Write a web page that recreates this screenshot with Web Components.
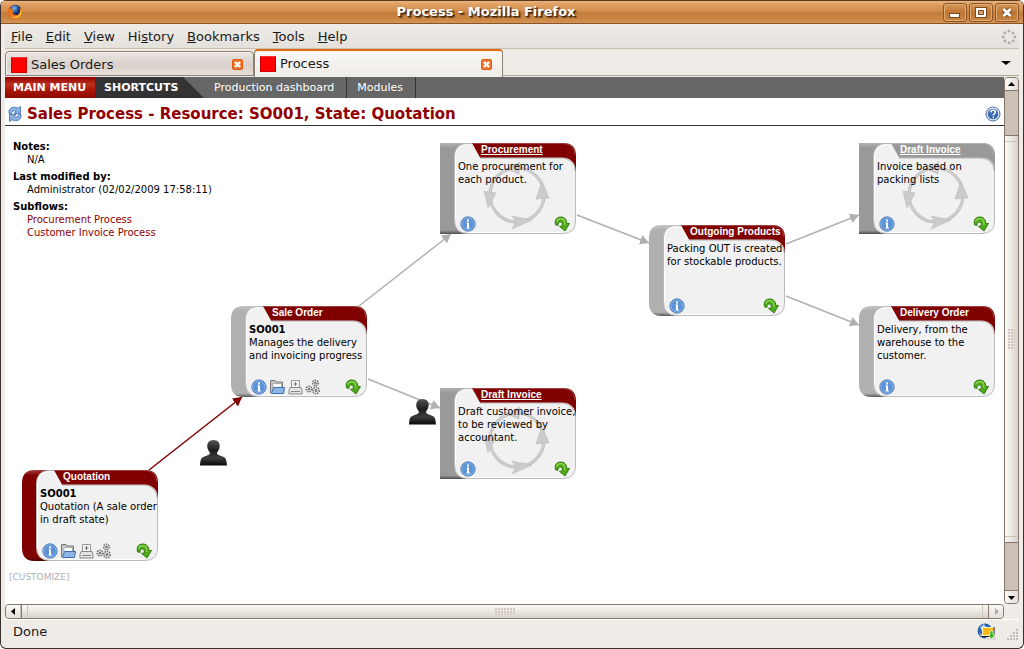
<!DOCTYPE html>
<html lang="en">
<head>
<meta charset="utf-8">
<title>Process - Mozilla Firefox</title>
<style>
html, body { margin: 0; height: 100%; background: #fff; }
body { font: 13px/16px "DejaVu Sans", sans-serif; color: #1a1a1a; }
</style>
</head>
<body>
<browser-window>
  <title-bar slot="title">Process - Mozilla Firefox</title-bar>
  <menu-bar slot="menu"></menu-bar>
  <tab-strip slot="tabs">
    <browser-tab>Sales Orders</browser-tab>
    <browser-tab active>Process</browser-tab>
  </tab-strip>
  <process-page slot="page"></process-page>
  <scroll-bar slot="vbar" vertical style="--a:44;--t:409;--b:47"></scroll-bar>
  <scroll-bar slot="hbar" style="--a:1;--t:967;--b:0"></scroll-bar>
  <status-bar slot="status">Done</status-bar>
</browser-window>

<script>
const define = (name, html, setup) => {
  const template = document.createElement('template');
  template.innerHTML = html;
  customElements.define(name, class extends HTMLElement {
    constructor() {
      super();
      this.attachShadow({ mode: 'open' }).append(template.content.cloneNode(true));
    }
    connectedCallback() { if (setup) setup(this, this.shadowRoot); }
  });
};
const RESET = `*{box-sizing:border-box} button{font:inherit;color:inherit;background:none;border:0;padding:0;margin:0} svg{display:block}`;

define('browser-window', `<style>${RESET}
:host{display:flex;flex-direction:column;min-height:100vh;box-sizing:border-box;background:#efebe7;border:1px solid #3b3230;border-top:0;border-radius:6px;overflow:hidden}
.inner{flex:1;display:flex;flex-direction:column;padding:0 4px}
.view{flex:1;display:grid;grid-template-columns:minmax(0,1fr) 15px;grid-template-rows:minmax(0,1fr) 15px;border-bottom:1px solid #fff}
.view slot[name=hbar]{display:block;grid-column:1}
</style>
<slot name="title"></slot>
<div class="inner">
<slot name="menu"></slot><slot name="tabs"></slot>
<main class="view"><slot name="page"></slot><slot name="vbar"></slot><slot name="hbar"></slot></main>
<slot name="status"></slot>
</div>`);

define('title-bar', `<style>${RESET}
:host{display:grid;grid-template-columns:1fr auto 1fr;align-items:center;height:24px;flex:none;box-sizing:border-box;padding:0 4px 0 6px;border-top:1px solid #5a3a20;border-bottom:1px solid #8a5526;background:linear-gradient(#e9b27c 0,#dd9c5e 20%,#d08c4b 48%,#c37d3a 52%,#c98542 80%,#d59556);color:#fff;font-weight:bold}
h1{font:inherit;margin:0;text-shadow:1px 1px 1px #3c2410,2px 2px 1px #6b4420;padding-right:54px}
.b{display:flex;gap:2px;justify-content:flex-end}
.b button{width:24px;height:19px;border:1px solid #8a5526;border-radius:3px;box-shadow:inset 0 0 0 1px #e2ac76;background:linear-gradient(#d8985b,#bd7634 50%,#c98542)}
</style>
<svg width="16" height="16" viewBox="0 0 16 16"><defs><radialGradient id="g" cx=".4" cy=".3"><stop offset="0" stop-color="#7cc3f2"/><stop offset=".6" stop-color="#2a5cae"/><stop offset="1" stop-color="#132a66"/></radialGradient></defs><circle cx="8" cy="8" r="7.2" fill="#d2470c"/><circle cx="8.3" cy="6.6" r="5.8" fill="url(#g)"/><path d="M1 5 2.5 2.6 3 4.4 6 4.2 5 6.2 7.5 7 5.8 8.6C6 11 9 12 11.5 10.2 13 9 13.5 6 12.8 3.6 15.5 6 15.8 10 13.3 13 10 16.3 5 15.8 2.4 12.6.8 10.5.4 7.6 1 5z" fill="#e8701a"/><path d="M13.6 4.5C14.2 9 12 12.6 8 12.8 5 12.8 4 11.4 3.5 10.4 5 15 12 15.5 14.2 10.5c.9-2 .4-4.500-.6-6z" fill="#fbc62d"/></svg>
<h1><slot></slot></h1>
<div class="b">
<button aria-label="Minimize"><svg width="22" height="17"><rect x="5" y="9" width="11" height="5" fill="#7a4a1e"/><rect x="6" y="10" width="9" height="3" fill="#fff"/></svg></button>
<button aria-label="Maximize"><svg width="22" height="17"><rect x="5.500" y="3.500" width="11" height="10" fill="none" stroke="#7a4a1e"/><path d="M6 4h10v9H6z" fill="#fff"/><path d="M8.500 6.500h5v4h-5z" fill="#d5a06a" stroke="#7a4a1e"/></svg></button>
<button aria-label="Close"><svg width="22" height="17"><path d="m7.500 5 7 7m0-7-7 7" stroke="#7a4a1e" stroke-width="5"/><path d="m7.500 5 7 7m0-7-7 7" stroke="#fff" stroke-width="3"/></svg></button>
</div>`);

define('menu-bar', `<style>${RESET}
:host{display:flex;justify-content:space-between;align-items:center;height:25px;flex:none;box-sizing:border-box;border-bottom:1px solid #cdbfae;background:linear-gradient(#efebe7,#e4e0da);padding:2px 2px 0 6px}
nav{display:flex;gap:13px}
</style>
<nav><button><u>F</u>ile</button><button><u>E</u>dit</button><button><u>V</u>iew</button><button>Hi<u>s</u>tory</button><button><u>B</u>ookmarks</button><button><u>T</u>ools</button><button><u>H</u>elp</button></nav>
<svg width="16" height="16" viewBox="-8 -8 16 16" fill="#b0aba4"><g id="d"><circle cy="-5.800" r="1.400"/><circle cx="5.800" r="1.400"/><circle cy="5.800" r="1.400"/><circle cx="-5.800" r="1.400"/></g><use href="#d" transform="rotate(45)"/></svg>`);

define('tab-strip', `<style>${RESET}
:host{display:flex;align-items:flex-end;height:28px;flex:none;box-sizing:border-box;background:linear-gradient(#b1a596,#b1a596) 0 26px/100% 1px no-repeat}
.all{margin-left:auto;align-self:center;padding:0 8px}
</style><slot></slot><button class="all" aria-label="List all tabs"><svg width="10" height="6"><path d="M0 1h10L5 5z"/></svg></button>`);

define('browser-tab', `<style>${RESET}
:host{display:flex;align-items:center;width:249px;height:25px;box-sizing:border-box;margin-bottom:1px;border:1px solid #8d7f72;border-radius:4px 4px 0 0;padding:2px 10px 0 5px;background:linear-gradient(#e9e5e1,#d9d0ca 60%,#e6e0dc);box-shadow:inset 1px 1px #f7f4f2}
:host([active]){height:28px;margin:0;border-top:2px solid #dd6a16;border-bottom:0;background:linear-gradient(#f9f8f6,#efebe7);padding-top:0}
.tab{display:flex;align-items:center;gap:4px;flex:1}
i{width:16px;height:16px;background:red;border:1px solid #c00;border-top-color:#f33}
</style>
<button class="tab" role="tab"><i></i><slot></slot></button>
<button aria-label="Close tab"><svg width="11" height="11"><rect x=".5" y=".5" width="10" height="10" rx="1.500" fill="#f0742a" stroke="#dd5a10"/><path d="m3 3 5 5m0-5L3 8" stroke="#fff" stroke-width="2.400"/></svg></button>`);

define('scroll-bar', `<style>${RESET}
:host{display:flex;box-sizing:border-box;height:15px;border:1px solid #85766a;border-radius:4px;background:#cbc1b7;overflow:hidden}
:host([vertical]){flex-direction:column;width:15px;height:auto;min-height:0}
button{flex:0 0 14px;align-self:stretch;display:grid;place-items:center;background:linear-gradient(90deg,#fbfaf9,#e3ded8)}
.a{flex:var(--a) 1 0}.b{flex:var(--b) 1 0}
.thumb{flex:var(--t) 1 0;display:flex;align-items:center;justify-content:center;border:solid #85766a;border-width:0 1px;background:linear-gradient(#fcfbfa,#d8d2c9);position:relative}
.thumb::before{content:"";position:absolute;inset:0 5px;border:solid #cbc5bc;border-width:0 1px}
:host([vertical]) .thumb{border-width:1px 0;background:linear-gradient(90deg,#fcfbfa,#d8d2c9)}
:host([vertical]) .thumb::before{inset:5px 0;border-width:1px 0}
.grip{width:20px;height:7px;background:radial-gradient(circle at 1px 1px,#cdc6bd 1px,transparent 1px) 0 0/3px 3px}
:host([vertical]) .grip{width:7px;height:20px}
:host([vertical]) svg{transform:rotate(90deg)}
:host([vertical]) button{flex-basis:13px;border:solid #85766a;border-width:0 0 1px}
:host([vertical]) button:last-child{border-width:1px 0 0}
</style>
<button aria-label="Back"><svg width="9" height="9"><path d="M2 4.500 6 1v7z"/></svg></button><div class="a"></div><div class="thumb" role="scrollbar" aria-controls="page" aria-valuenow="0"><div class="grip"></div></div><div class="b"></div><button aria-label="Forward"><svg width="9" height="9"><path class="f" d="M7 4.500 3 1v7z"/></svg></button>`,
(el, root) => { if (!el.hasAttribute('vertical')) {
  root.querySelector('.f').setAttribute('fill', '#b5ada3');
  root.querySelectorAll('button').forEach((b, i) => b.style.cssText = 'background:linear-gradient(#fbfaf9,#e3ded8)');
} });

define('status-bar', `<style>${RESET}
:host{display:flex;align-items:center;height:28px;flex:none;box-sizing:border-box;padding:0 0 4px 8px}
.n{margin-left:auto;display:flex;gap:9px;align-items:center}
.n svg:last-child{align-self:flex-end}
</style><slot></slot>
<span class="n"><svg width="20" height="18" viewBox="0 0 20 18"><circle cx="8" cy="8" r="7.500" fill="#2f62ae"/><path d="M3 4 7 1 9 4 5 8z M2 9l3 3-1 2z" fill="#a9cdf0"/><rect x="5.500" y="4.500" width="11" height="8" fill="#fdb913" stroke="#fff3c8"/><path d="M5 13.500h12V4" fill="none" stroke="#111"/><rect x="9" y="14" width="10" height="3" fill="#ddd"/><path d="M13 8h3v4h2l-3.500 4-3.500-4h2z" fill="#39b21a" stroke="#fff" stroke-width=".6"/></svg>
<svg width="13" height="13" fill="#c2bbb2"><path d="M10 1h2v2h-2zM7 4h2v2H7zM10 4h2v2h-2zM4 7h2v2H4zM7 7h2v2H7zM10 7h2v2h-2zM1 10h2v2H1zM4 10h2v2H4zM7 10h2v2H7zM10 10h2v2h-2z"/></svg></span>`);

define('process-page', `<style>${RESET}
:host{display:flex;flex-direction:column;background:#fff;min-width:0}
nav{display:flex;height:21px;flex:none;background:#666;color:#fff;font-size:11px;line-height:21px}
nav a{color:inherit;text-decoration:none;padding:0 12px 0 10px;border-right:1px solid #333}
nav .main{font-weight:bold;border:0;padding:0 8px;min-width:90px;background:linear-gradient(#8e0000,#c0311f 35%,#a81408 65%,#8e0a00)}
nav .short{font-weight:bold;padding:0 24px 0 9px;min-width:109px;background:#333;clip-path:polygon(0 0,88px 0,100% 100%,0 100%)}
header{display:flex;align-items:center;gap:4px;height:28px;flex:none;border-bottom:1px solid #333;padding:4px 3px 0 2px}
h2{margin:0;flex:1;font-size:15px;line-height:20px;color:#900000}
.flow{flex:1;position:relative;font-size:10px;line-height:13px;color:#000;display:flex;flex-direction:column}
dl{margin:0;padding:14px 8px}
dt{font-weight:bold}
dd{margin:0 0 0 14px}
dd + dt{margin-top:4px}
a.s{color:#900000;text-decoration:none}
.cust{margin:auto 0 0 4px;padding-bottom:20px;font-size:9px}
.cust a{color:#b0b0b0;text-decoration:none}
.edges,process-node,user-mark{position:absolute;left:var(--x);top:var(--y)}
.edges{--x:0;--y:0;overflow:visible}
</style>
<nav><a class="main" href="#">MAIN MENU</a><span class="short">SHORTCUTS</span><a href="#">Production dashboard</a><a href="#">Modules</a></nav>
<header>
<svg width="16" height="16" viewBox="0 0 16 16" fill="#8db1de" stroke="#3f6fae" stroke-width=".8"><path d="M2 7.500C1.200 3 4.500.8 8.500 1.300l2.500.9 2.500-1.700V7.500H7L9 5.300C6.500 4.300 4.800 5 4.500 7.500z"/><path d="M14 8.500c.8 4.500-2.500 6.700-6.500 6.200L5 13.800l-2.500 1.700V8.500H9L7 10.700c2.500 1 4.200.3 4.500-2.200z"/></svg>
<h2>Sales Process - Resource: SO001, State: Quotation</h2>
<button aria-label="Help"><svg width="16" height="16" viewBox="0 0 16 16"><circle cx="8" cy="8" r="7" fill="#e4edf8" stroke="#426ba8"/><circle cx="8" cy="8" r="5.300" fill="#3d6cae"/><path d="M5.900 6.400C6 4.500 7 4.200 8 4.200c1.300 0 2.300.7 2.300 2 0 1.500-2 1.700-2 3.200M8.200 10.700v1.400" fill="none" stroke="#fff" stroke-width="1.500"/></svg></button>
</header>
<section class="flow">
<dl><dt>Notes:</dt><dd>N/A</dd><dt>Last modified by:</dt><dd>Administrator (02/02/2009 17:58:11)</dd><dt>Subflows:</dt><dd><a class="s" href="#">Procurement Process</a></dd><dd><a class="s" href="#">Customer Invoice Process</a></dd></dl>
<svg class="edges" width="990" height="430" fill="none" stroke="#b0b0b0" stroke-width="1.500"><defs><marker id="a" markerWidth="10" markerHeight="10" refX="9" refY="5" orient="auto" markerUnits="userSpaceOnUse"><path d="M0 0v10l9-5z" fill="#b0b0b0" stroke="none"/></marker><marker id="r" markerWidth="10" markerHeight="10" refX="9" refY="5" orient="auto" markerUnits="userSpaceOnUse"><path d="M0 0v10l9-5z" fill="#800000" stroke="none"/></marker></defs>
<path d="m144 344 93-73" stroke="#800000" marker-end="url(#r)"/>
<g marker-end="url(#a)"><path d="m354 180 92-72"/><path d="m363 253 72 29"/><path d="m572 89 72 28"/><path d="m781 118 73-29"/><path d="m781 170 73 29"/></g></svg>
<user-mark style="--x:194px;--y:313px"></user-mark>
<user-mark style="--x:403px;--y:272px"></user-mark>
<process-node current full style="--x:17px;--y:344px"><span slot="title">Quotation</span><b>SO001</b><br>Quotation (A sale order<br>in draft state)</process-node>
<process-node full style="--x:226px;--y:180px"><span slot="title">Sale Order</span><b>SO001</b><br>Manages the delivery<br>and invoicing progress</process-node>
<process-node subflow style="--x:435px;--y:17px"><a slot="title" href="#" style="color:inherit">Procurement</a>One procurement for<br>each product.</process-node>
<process-node subflow style="--x:435px;--y:262px"><a slot="title" href="#" style="color:inherit">Draft Invoice</a>Draft customer invoice,<br>to be reviewed by<br>accountant.</process-node>
<process-node style="--x:644px;--y:99px"><span slot="title">Outgoing Products</span>Packing OUT is created<br>for stockable products.</process-node>
<process-node subflow grey style="--x:854px;--y:17px"><a slot="title" href="#" style="color:inherit">Draft Invoice</a>Invoice based on<br>packing lists</process-node>
<process-node style="--x:854px;--y:180px"><span slot="title">Delivery Order</span>Delivery, from the<br>warehouse to the<br>customer.</process-node>
<div class="cust"><a href="#">[CUSTOMIZE]</a></div>
</section>`);

define('user-mark', `<style>:host{display:block}svg{display:block}</style><svg width="29" height="28" viewBox="0 0 29 28"><defs><linearGradient id="g" x2="0" y2="1"><stop offset="0" stop-color="#555"/><stop offset=".4" stop-color="#1c1c1c"/><stop offset=".7" stop-color="#3c3c3c"/><stop offset="1" stop-color="#080808"/></linearGradient></defs><path d="M14.500 1c4 0 6.500 2.800 6.200 6.600-.2 2.600-1.400 4.300-2.500 5.700-.4 1.700.2 2.400 2 3l4.500 1.700c2.400 1 3 3.800 3.200 8.500H1c.2-4.700.8-7.500 3.200-8.500l4.500-1.700c1.800-.6 2.400-1.300 2-3-1.100-1.400-2.300-3.100-2.500-5.700C8 3.800 10.500 1 14.500 1z" fill="url(#g)"/></svg>`);

define('process-node', `<style>${RESET}
:host{display:flex;flex-direction:column;width:136px;height:91px;--side:#b0b0b0;--head:#800000;box-sizing:border-box}
:host([current]){--side:#800000}
:host([subflow]){--side:#999}
:host([grey]){--head:#999}
.bg{position:absolute;z-index:-1;left:0;top:0}
:host{z-index:0}
.round,.square,.cycle{display:none}
:host([subflow]) .square,:host([subflow]) .cycle,:host(:not([subflow])) .round{display:inline}
h3{margin:0;padding-left:41px;height:17px;font:bold 10px/13px "Liberation Sans",sans-serif;color:#fff;white-space:nowrap}
p{margin:0;padding-left:18px;flex:1;white-space:nowrap}
footer{display:flex;gap:2px;padding:0 6px 2px 20px}
footer button:last-child{margin-left:auto}
.x{display:none}:host([full]) .x{display:block}
</style>
<svg class="bg" width="136" height="91" viewBox="0 0 136 91"><defs>
<linearGradient id="s" x2="0" y2="1"><stop offset="0" stop-color="#fff" stop-opacity=".25"/><stop offset=".06" stop-color="#fff" stop-opacity="0"/><stop offset=".96" stop-opacity="0"/><stop offset="1" stop-opacity=".5"/></linearGradient></defs>
<g class="round"><path d="M13 0h20v91H13Q0 91 0 78V13Q0 0 13 0z" style="fill:var(--side)"/><path d="M13 0h20v91H13Q0 91 0 78V13Q0 0 13 0z" fill="url(#s)"/></g>
<g class="square"><path d="M0 0h33v91H0z" style="fill:var(--side)"/><path d="M0 0h33v91H0z" fill="url(#s)"/></g>
<path d="M28 .5h95q12.500 0 12.500 12.500v65q0 12.500-12.500 12.500H28Q14.500 90.500 14.500 77V14Q14.500 .5 28 .5z" fill="#f1f1f1" stroke="#bbb"/>
<path d="M15.500 76V14Q15.500 2 28 1.500M28 89.500h94" fill="none" stroke="#fff"/>
<path d="M32 0h91q13 0 13 13v15q-1-13-14-13.500H40z" style="fill:var(--head)"/>
<path d="M33 .5h90q11 0 12 11" fill="none" stroke="#fff" stroke-opacity=".25"/><path d="M40 15h82q12 1 13.500 13" fill="none" stroke="#000" stroke-opacity=".25"/>
<g class="cycle" fill="#cbcbcb"><circle cx="77" cy="52" r="27" fill="none" stroke="#b9b9b9" stroke-width="3"/><circle cx="77" cy="52" r="27" fill="none" stroke="#d3d3d3" stroke-width="1.500"/><path d="m102 38 7 17-13 1zM48 65l-4-17 12 2zM67 26l13-7-1 12zM92 77 72 86l4-7-4-6z" stroke="#bdbdbd" stroke-width=".6"/></g>
</svg>
<h3><slot name="title"></slot></h3>
<p><slot></slot></p>
<footer>
<button aria-label="Info"><svg width="16" height="16" viewBox="0 0 16 16"><circle cx="8" cy="8" r="7.200" fill="#5b93d6" stroke="#3f6fae" stroke-width=".8"/><circle cx="8" cy="8" r="6.200" fill="none" stroke="#93bbe8" stroke-width=".8"/><path d="M7 3.500h2v2H7zM6.500 6.500H9v5h1v1H6.500v-1H7v-4h-.5z" fill="#fff"/></svg></button>
<button class="x" aria-label="Open"><svg width="16" height="16" viewBox="0 0 16 16"><path d="M1.500 14V1.500H6l1 1.500h6.500v5" fill="#c4c8cb" stroke="#777"/><path d="M4 4.500h8.500V9H4z" fill="#fff" stroke="#999" stroke-width=".7"/><path d="M4.500 8.500h11l-1 6h-12z" fill="#8db5e3" stroke="#3e6fae"/></svg></button>
<button class="x" aria-label="Print"><svg width="16" height="16" viewBox="0 0 16 16"><path d="M4.500 9V1.500h8V9" fill="#f8f8f8" stroke="#999"/><path d="M8.500 3v4m-2-2h4" stroke="#777"/><path d="M3 8.500h11l1 3v3.500H2v-3.500z" fill="#e4e4e4" stroke="#888"/><path d="M4 12.500h9" stroke="#888"/></svg></button>
<button class="x" aria-label="Configure"><svg width="16" height="16" viewBox="0 0 16 16" fill="#e8e8e8" stroke="#777"><g stroke-dasharray="1.500 .9" stroke-width="1.600"><circle cx="10.500" cy="4" r="2.800"/><circle cx="4" cy="10" r="2.800"/><circle cx="11" cy="11.500" r="3.200"/></g><g stroke="#555"><circle cx="10.500" cy="4" r=".8"/><circle cx="4" cy="10" r=".8"/><circle cx="11" cy="11.500" r="1"/></g></svg></button>
<button aria-label="Next"><svg width="16" height="16" viewBox="0 0 16 16"><path d="M1.500 8.800C.2 3.500 3 1 6.700 1c4 0 5.900 2.500 6.100 6.500h2.700L11 15l-5.500-4.600 2.700-.4C8.600 7.500 8 6 6.300 6 4.600 6 3.700 7.500 4 9.500z" fill="#4eaa1a" stroke="#2b7406" stroke-width=".9"/><path d="M2.500 5.500C4 1.500 10 1.300 10.900 6.500v2.500" fill="none" stroke="#93d95a" stroke-width="1.200"/></svg></button>
</footer>`);
</script>
</body>
</html>
